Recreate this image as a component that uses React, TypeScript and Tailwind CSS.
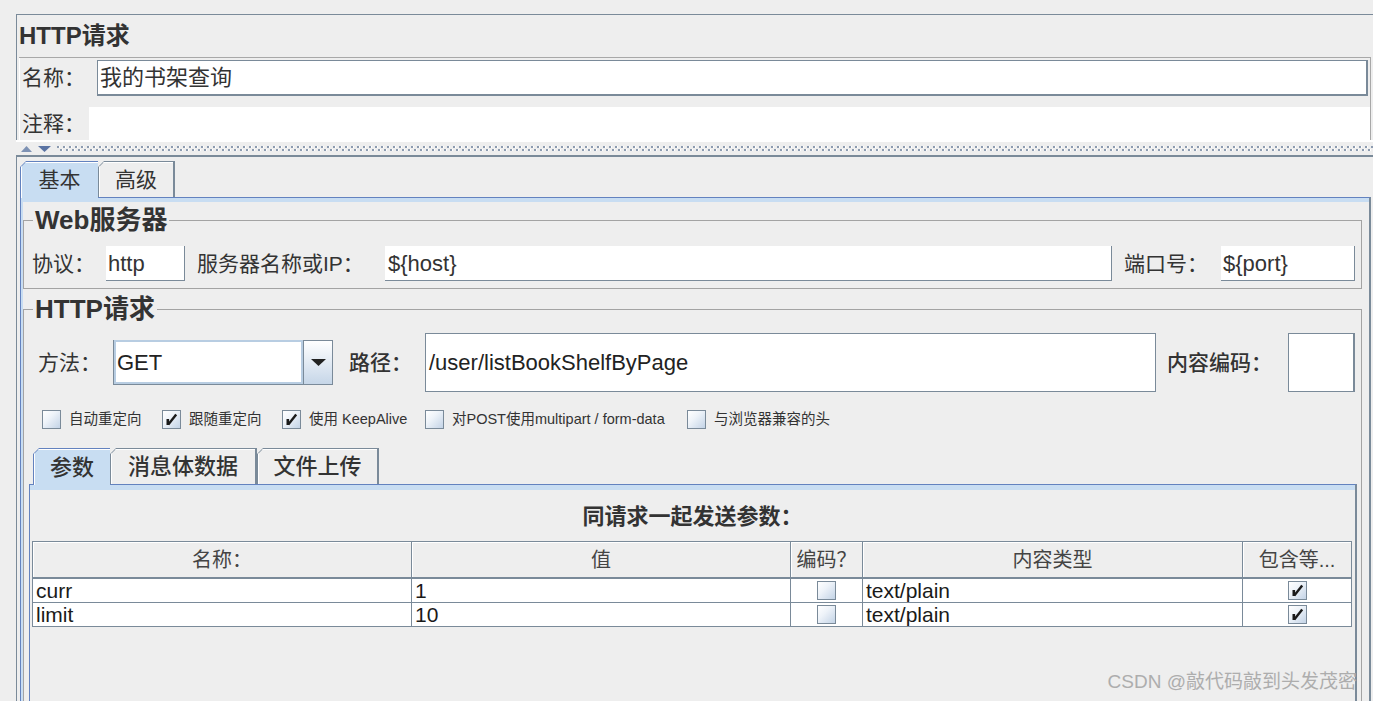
import React from "react";

function Box({ checked }: { checked?: boolean }) {
  return (
    <span className="relative inline-block w-[19px] h-[19px] shrink-0 border border-[#7a8a99] bg-[linear-gradient(135deg,#ffffff_0%,#eef3f9_40%,#c3d3e6_100%)]">
      {checked && (
        <svg className="absolute left-0 top-0" width="17" height="17" viewBox="0 0 17 17">
          <rect x="3.5" y="8" width="2.6" height="6" fill="#1a1a1a" />
          <path d="M13.2 3.5 L5.3 13.4" stroke="#1a1a1a" strokeWidth="2.4" />
        </svg>
      )}
    </span>
  );
}

function Tab({
  label,
  selected,
  w,
  text,
}: {
  label: string;
  selected?: boolean;
  w: string;
  text: string;
}) {
  return (
    <div
      className={`${w} shrink-0 [clip-path:polygon(6px_0,100%_0,100%_100%,0_100%,0_6px)] ${
        selected
          ? "relative z-10 -mb-[1px] h-[37px] bg-[#6382bf] pt-[1px] pl-[1px]"
          : "h-[36px] bg-[#7a8a99] pt-[1px] pl-[1px] pr-[2px]"
      }`}
    >
      <div
        className={`h-full w-full flex items-center justify-center [clip-path:polygon(5px_0,100%_0,100%_100%,0_100%,0_5px)] shadow-[inset_1px_1px_0_#ffffff] ${
          selected ? "bg-[#c8ddf2]" : "bg-[#eeeeee]"
        } ${text}`}
      >
        {label}
      </div>
    </div>
  );
}

function CheckItem({ label, checked, w }: { label: string; checked?: boolean; w: string }) {
  return (
    <div className={`${w} shrink-0 flex items-center gap-[8px]`}>
      <Box checked={checked} />
      <span className="text-[14.5px] leading-[19px] text-[#333] whitespace-nowrap">{label}</span>
    </div>
  );
}

export default function App() {
  return (
    <div className="relative w-[1373px] h-[701px] overflow-hidden bg-[#eeeeee] pl-[16px] pt-[14px] text-[#333] [font-family:'Liberation_Sans','Noto_Sans_CJK_SC',sans-serif]">
      {/* Top panel */}
      <div className="border-t border-l border-[#7a8a99]">
        <div className="h-[42px] flex items-center pl-[2px] text-[24px] font-bold leading-none text-[#333]">
          HTTP请求
        </div>
        <div className="ml-[2px] mr-[2px] border-t border-r border-[#a8a8a8] shadow-[inset_1px_0_0_#ffffff] pt-[2px]">
          <div className="flex h-[36px]">
            <div className="w-[78px] pl-[3px] flex items-center text-[21px]">名称：</div>
            <div className="flex-1 mr-[2px] bg-white border-t border-l border-r-2 border-b-2 border-[#7a8a99] flex items-center pl-[2px] text-[22px] text-[#333]">
              我的书架查询
            </div>
          </div>
          <div className="flex h-[33px] mt-[11px]">
            <div className="w-[70px] pl-[3px] flex items-center text-[21px]">注释：</div>
            <div className="flex-1 bg-white" />
          </div>
        </div>
      </div>

      {/* Splitter */}
      <div className="h-[2px] bg-white" />
      <div className="h-[13px] flex items-center pl-[5px] gap-[6px]">
        <svg width="11" height="6" viewBox="0 0 11 6" className="shrink-0">
          <path d="M0 6 L5.5 0 L11 6 Z" fill="#7e92b4" />
        </svg>
        <svg width="13" height="6" viewBox="0 0 13 6" className="shrink-0">
          <path d="M0 0 L13 0 L6.5 6 Z" fill="#5a73a3" />
        </svg>
        <div className="flex-1 flex flex-col gap-[1px]">
          <div className="h-[2px] bg-[repeating-linear-gradient(90deg,#8c9bb0_0_2px,#ffffff_2px_3px,transparent_3px_6px)]" />
          <div className="h-[2px] bg-[repeating-linear-gradient(90deg,transparent_0_3px,#8c9bb0_3px_5px,#ffffff_5px_6px)]" />
        </div>
      </div>

      {/* Lower panel */}
      <div className="border-t-2 border-l border-[#7a8a99] pt-[4px] pl-[3px] h-[560px]">
        <div className="flex items-end h-[36px]">
          <Tab label="基本" selected w="w-[78px]" text="text-[21px] text-[#333]" />
          <Tab label="高级" w="w-[77px]" text="text-[21px] text-[#333]" />
        </div>
        <div className="mr-[2px] border-t border-l border-[#6382bf] border-r-2 border-r-[#7a8a99] h-[520px] shadow-[inset_2px_0_0_#c8ddf2]">
          <div className="h-[4px] bg-[#c8ddf2]" />

          {/* Web server */}
          <fieldset className="mt-[4px] ml-[2px] mr-[7px] border border-[#a3a3a3] pb-[7px]">
            <legend className="ml-[9px] px-[2px] text-[26px] leading-[28px] font-bold text-[#333]">
              Web服务器
            </legend>
            <div className="mt-[12px] flex items-center h-[35px] pl-[8px] pr-[6px]">
              <div className="w-[74px] shrink-0 text-[21px]">协议：</div>
              <div className="w-[79px] shrink-0 h-full bg-white border-r border-b border-[#7a8a99] flex items-center pl-[2px] text-[22px]">
                http
              </div>
              <div className="ml-[12px] w-[188px] shrink-0 text-[21px]">服务器名称或IP：</div>
              <div className="flex-1 h-full bg-white border-r border-b border-[#7a8a99] flex items-center pl-[3px] text-[22px]">
                {"${host}"}
              </div>
              <div className="ml-[12px] w-[97px] shrink-0 text-[21px]">端口号：</div>
              <div className="w-[134px] shrink-0 h-full bg-white border-r border-b border-[#7a8a99] flex items-center pl-[2px] text-[22px]">
                {"${port}"}
              </div>
            </div>
          </fieldset>

          {/* HTTP request */}
          <fieldset className="mt-[6px] ml-[2px] mr-[7px] border border-[#a3a3a3] h-[420px]">
            <legend className="ml-[9px] px-[2px] text-[26px] leading-[28px] font-bold text-[#333]">
              HTTP请求
            </legend>
            <div className="mt-[10px] flex items-center h-[59px] pl-[14px] pr-[6px]">
              <div className="w-[75px] shrink-0 text-[21px]">方法：</div>
              <div className="w-[220px] h-[45px] shrink-0 flex">
                <div className="flex-1 border-l border-b border-[#7a8a99] flex">
                  <div className="flex-1 bg-white border-2 border-[#b8cde2] flex items-center pl-[1px] text-[22px] text-[#222]">
                    GET
                  </div>
                </div>
                <div className="w-[30px] border border-[#7a8a99] bg-[linear-gradient(to_bottom,#ffffff,#c6d6e8)] flex items-center justify-center">
                  <svg width="15" height="7" viewBox="0 0 15 7">
                    <path d="M0 0 L15 0 L7.5 7 Z" fill="#222" />
                  </svg>
                </div>
              </div>
              <div className="ml-[16px] w-[76px] shrink-0 text-[21px] font-medium">路径：</div>
              <div className="flex-1 h-full bg-white border border-[#7a8a99] flex items-center pl-[3px] text-[22px] text-[#222]">
                /user/listBookShelfByPage
              </div>
              <div className="ml-[11px] w-[121px] shrink-0 text-[21px] font-medium">内容编码：</div>
              <div className="w-[67px] shrink-0 h-full bg-white border border-r-2 border-[#7a8a99]" />
            </div>

            <div className="mt-[18px] h-[19px] flex items-center pl-[18px]">
              <CheckItem w="w-[120px]" label="自动重定向" />
              <CheckItem w="w-[120px]" label="跟随重定向" checked />
              <CheckItem w="w-[143px]" label="使用 KeepAlive" checked />
              <CheckItem w="w-[262px]" label="对POST使用multipart / form-data" />
              <CheckItem w="w-[200px]" label="与浏览器兼容的头" />
            </div>

            {/* Sub tabs */}
            <div className="mt-[18px] ml-[5px] mr-[4px]">
              <div className="flex items-end h-[37px] pl-[4px]">
                <Tab label="参数" selected w="w-[77px]" text="text-[22px] font-medium text-[#333]" />
                <Tab label="消息体数据" w="w-[147px]" text="text-[22px] font-medium text-[#333]" />
                <Tab label="文件上传" w="w-[122px]" text="text-[22px] font-medium text-[#333]" />
              </div>
              <div className="border-t border-l border-[#6382bf] border-r-2 border-r-[#7a8a99] h-[300px]">
                <div className="h-[5px] bg-[#c8ddf2]" />
                <div className="pt-[15px] text-center text-[22px] leading-[24px] font-bold text-[#333]">
                  同请求一起发送参数：
                </div>
                <div className="mt-[12px] ml-[2px] w-[1320px]">
                  <div className="flex h-[38px] border-t border-l border-b-2 border-[#7a8a99] bg-[#eeeeee] text-[20px] text-[#444]">
                    <div className="w-[379px] border-r border-[#7a8a99] shadow-[inset_1px_1px_0_#ffffff] flex items-center justify-center">名称：</div>
                    <div className="w-[379px] border-r border-[#7a8a99] shadow-[inset_1px_1px_0_#ffffff] flex items-center justify-center">值</div>
                    <div className="w-[72px] border-r border-[#7a8a99] shadow-[inset_1px_1px_0_#ffffff] flex items-center justify-center">编码？</div>
                    <div className="w-[380px] border-r border-[#7a8a99] shadow-[inset_1px_1px_0_#ffffff] flex items-center justify-center">内容类型</div>
                    <div className="w-[109px] border-r border-[#7a8a99] shadow-[inset_1px_1px_0_#ffffff] flex items-center justify-center">包含等...</div>
                  </div>
                  {[
                    ["curr", "1"],
                    ["limit", "10"],
                  ].map(([n, v]) => (
                    <div key={n} className="flex h-[24px] border-l border-b border-[#7a8a99] bg-white text-[21px] leading-[23px] text-[#1a1a1a]">
                      <div className="w-[379px] border-r border-[#7a8a99] pl-[3px]">{n}</div>
                      <div className="w-[379px] border-r border-[#7a8a99] pl-[3px]">{v}</div>
                      <div className="w-[72px] border-r border-[#7a8a99] flex items-center justify-center">
                        <Box />
                      </div>
                      <div className="w-[380px] border-r border-[#7a8a99] pl-[3px]">text/plain</div>
                      <div className="w-[109px] border-r border-[#7a8a99] flex items-center justify-center">
                        <Box checked />
                      </div>
                    </div>
                  ))}
                </div>
              </div>
            </div>
          </fieldset>
        </div>
      </div>

      <div className="absolute right-[16px] bottom-[8px] text-[19px] leading-[22px] text-[#adadad]">
        CSDN @敲代码敲到头发茂密
      </div>
    </div>
  );
}
